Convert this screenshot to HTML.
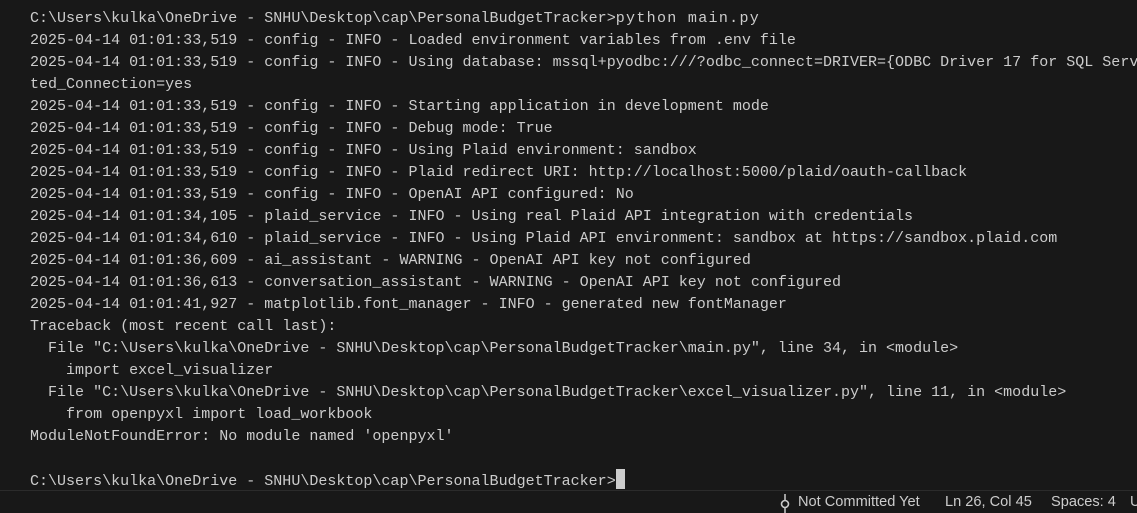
<!DOCTYPE html>
<html><head><meta charset="utf-8"><style>
html,body{margin:0;padding:0;width:1137px;height:512px;overflow:hidden;background:#181818;}
pre{position:absolute;left:30px;top:7px;width:1107px;overflow:hidden;margin:0;font-family:"Liberation Mono",monospace;font-size:15.02px;line-height:22px;color:#cccccc;white-space:pre;}
.cur{display:inline-block;width:9px;height:20px;background:#cccccc;vertical-align:-4px;}
.sb{position:absolute;left:0;top:490px;width:1137px;height:22px;border-top:1px solid #2b2b2b;background:#181818;font-family:"Liberation Sans",sans-serif;font-size:14.6px;color:#cccccc;}
.sb span{position:absolute;top:3px;white-space:nowrap;}
.w{letter-spacing:1.3px}
</style></head><body>
<pre>C:\Users\kulka\OneDrive - SNHU\Desktop\cap\PersonalBudgetTracker&gt;<span class="w">python main.py</span>
2025-04-14 01:01:33,519 - config - INFO - Loaded environment variables from .env file
2025-04-14 01:01:33,519 - config - INFO - Using database: mssql+pyodbc:///?odbc_connect=DRIVER={ODBC Driver 17 for SQL Serv
ted_Connection=yes
2025-04-14 01:01:33,519 - config - INFO - Starting application in development mode
2025-04-14 01:01:33,519 - config - INFO - Debug mode: True
2025-04-14 01:01:33,519 - config - INFO - Using Plaid environment: sandbox
2025-04-14 01:01:33,519 - config - INFO - Plaid redirect URI: http://localhost:5000/plaid/oauth-callback
2025-04-14 01:01:33,519 - config - INFO - OpenAI API configured: No
2025-04-14 01:01:34,105 - plaid_service - INFO - Using real Plaid API integration with credentials
2025-04-14 01:01:34,610 - plaid_service - INFO - Using Plaid API environment: sandbox at https://sandbox.plaid.com
2025-04-14 01:01:36,609 - ai_assistant - WARNING - OpenAI API key not configured
2025-04-14 01:01:36,613 - conversation_assistant - WARNING - OpenAI API key not configured
2025-04-14 01:01:41,927 - matplotlib.font_manager - INFO - generated new fontManager
Traceback (most recent call last):
  File "C:\Users\kulka\OneDrive - SNHU\Desktop\cap\PersonalBudgetTracker\main.py", line 34, in &lt;module&gt;
    import excel_visualizer
  File "C:\Users\kulka\OneDrive - SNHU\Desktop\cap\PersonalBudgetTracker\excel_visualizer.py", line 11, in &lt;module&gt;
    from openpyxl import load_workbook
ModuleNotFoundError: No module named 'openpyxl'

C:\Users\kulka\OneDrive - SNHU\Desktop\cap\PersonalBudgetTracker&gt;<span class="cur"></span></pre>
<div class="sb">
<svg style="position:absolute;left:780px;top:3px" width="10" height="19" viewBox="0 0 10 19"><line x1="5" y1="0" x2="5" y2="19" stroke="#ccc" stroke-width="1.5"/><circle cx="5" cy="10" r="3.5" fill="#181818" stroke="#ccc" stroke-width="1.6"/></svg>
<span style="left:798px">Not Committed Yet</span>
<span style="left:945px">Ln 26, Col 45</span>
<span style="left:1051px">Spaces: 4</span>
<span style="left:1130px">U</span>
</div>
</body></html>
